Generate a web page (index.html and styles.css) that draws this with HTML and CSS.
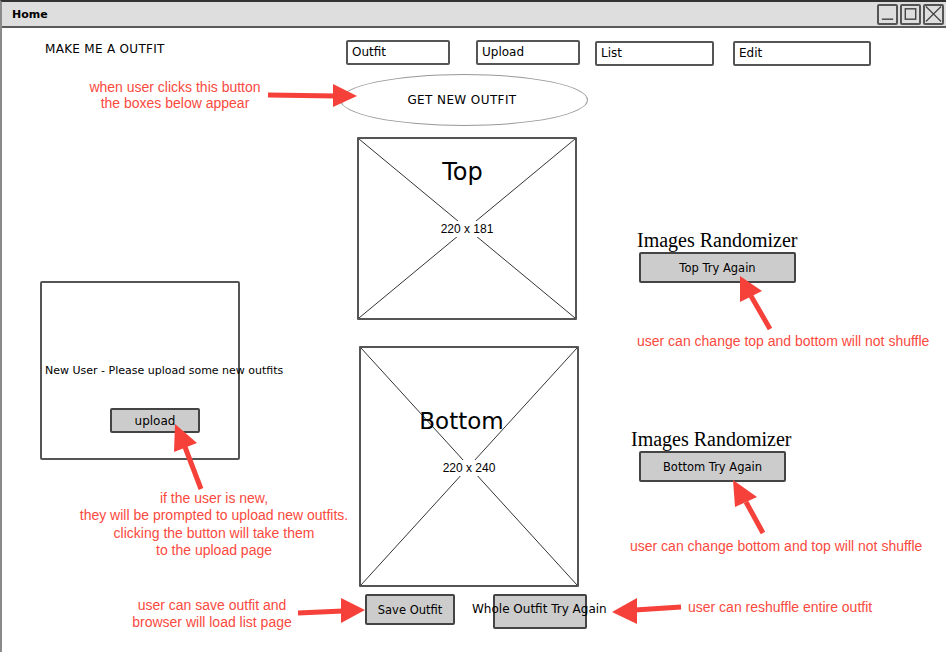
FILE: index.html
```html
<!DOCTYPE html>
<html lang="en">
<head>
<meta charset="utf-8">
<title>Home</title>
<link rel="stylesheet" href="styles.css">
</head>
<body>
<div class="window">
  <div class="titlebar">
    <span class="title">Home</span>
    <div class="winbtns">
      <span class="winbtn"><svg viewBox="0 0 18 18" width="18" height="18"><line x1="3" y1="14.5" x2="15" y2="14.5" stroke="#444" stroke-width="1.5"/></svg></span>
      <span class="winbtn"><svg viewBox="0 0 18 18" width="18" height="18"><rect x="3.5" y="3.5" width="11" height="11" fill="none" stroke="#444" stroke-width="1.5"/></svg></span>
      <span class="winbtn"><svg viewBox="0 0 18 18" width="18" height="18"><path d="M1 1 L17 17 M17 1 L1 17" stroke="#444" stroke-width="1.3"/></svg></span>
    </div>
  </div>

  <div class="content">
    <div class="header">
      <div class="brand">MAKE ME A OUTFIT</div>
      <div class="field w104">Outfit</div>
      <div class="field w104">Upload</div>
      <div class="field w119 low">List</div>
      <div class="field w138 low">Edit</div>
    </div>

    <div class="ellipse">GET NEW OUTFIT</div>

    <div class="main">
      <div class="col-left">
        <div class="newuser">
          <div class="newuser-text">New User - Please upload some new outfits</div>
          <div class="btn btn-upload">upload</div>
        </div>
      </div>

      <div class="col-mid">
        <div class="ph ph-top">
          <svg class="ph-x" viewBox="0 0 100 100" preserveAspectRatio="none"><path d="M0 0 L100 100 M100 0 L0 100" stroke="#333" stroke-width="1" vector-effect="non-scaling-stroke" fill="none"/></svg>
          <div class="ph-title ph-title-top">Top</div>
          <div class="ph-size ph-size-top">220 x 181</div>
        </div>
        <div class="ph ph-bottom">
          <svg class="ph-x" viewBox="0 0 100 100" preserveAspectRatio="none"><path d="M0 0 L100 100 M100 0 L0 100" stroke="#333" stroke-width="1" vector-effect="non-scaling-stroke" fill="none"/></svg>
          <div class="ph-title ph-title-bottom">Bottom</div>
          <div class="ph-size ph-size-bottom">220 x 240</div>
        </div>
        <div class="actions">
          <div class="btn btn-save">Save Outfit</div>
          <div class="whole">Whole Outfit Try Again</div>
        </div>
      </div>

      <div class="col-right">
        <div class="rand-title rt1">Images Randomizer</div>
        <div class="btn btn-top">Top Try Again</div>
        <div class="rand-title rt2">Images Randomizer</div>
        <div class="btn btn-bottom">Bottom Try Again</div>
      </div>
    </div>
  </div>

  <div class="overlay">
    <svg class="arrows" width="946" height="652" viewBox="0 0 946 652">
      <g stroke="#f5413a" stroke-width="5" fill="none">
        <line x1="268" y1="95" x2="336" y2="96"/>
        <line x1="770" y1="329" x2="751" y2="296"/>
        <line x1="763" y1="533" x2="746" y2="502"/>
        <line x1="201" y1="489" x2="185" y2="447"/>
        <line x1="298" y1="613" x2="343" y2="611"/>
        <line x1="681" y1="607" x2="635" y2="610"/>
      </g>
      <g fill="#f5413a">
        <polygon points="357,96 333,84 333,107"/>
        <polygon points="740,276 740,302 762,291"/>
        <polygon points="733,480 735,507 757,497"/>
        <polygon points="175,424 174,452 197,443"/>
        <polygon points="365,610 341,598 341,623"/>
        <polygon points="612,612 637,598 637,624"/>
      </g>
    </svg>
    <div class="note n1">when user clicks this button<br>the boxes below appear</div>
    <div class="note n2">user can change top and bottom will not shuffle</div>
    <div class="note n3">if the user is new,<br>they will be prompted to upload new outfits.<br>clicking the button will take them<br>to the upload page</div>
    <div class="note n4">user can change bottom and top will not shuffle</div>
    <div class="note n5">user can save outfit and<br>browser will load list page</div>
    <div class="note n6">user can reshuffle entire outfit</div>
  </div>
</div>
</body>
</html>
```

FILE: styles.css
```css
* { box-sizing: border-box; }
html, body { margin: 0; padding: 0; background: #fff; }
body {
  font-family: "DejaVu Sans", "Comic Sans MS", sans-serif;
  color: #000;
}
.window {
  position: relative;
  width: 946px;
  height: 652px;
  border-top: 2px solid #333;
  border-left: 2px solid #8a8a8a;
  overflow: hidden;
}
.titlebar {
  height: 26px;
  background: #dedede;
  border-bottom: 2px solid #5a5a5a;
  display: flex;
  align-items: center;
  padding-left: 10px;
  padding-right: 2px;
}
.title {
  font-size: 11px;
  font-weight: bold;
}
.winbtns {
  margin-left: auto;
  display: flex;
  gap: 2px;
}
.winbtn {
  width: 21px;
  height: 21px;
  border: 2px solid #555;
  border-radius: 2px;
  display: flex;
  align-items: center;
  justify-content: center;
  background: #dedede;
}
.winbtn svg { display: block; }

.content { padding-top: 12px; }
.header {
  display: grid;
  grid-template-columns: 301px 130px 119px 138px 138px;
  align-items: start;
  padding-left: 43px;
  height: 26px;
}
.brand {
  font-size: 12px;
  letter-spacing: 0.3px;
  line-height: 16px;
  padding-top: 1px;
  white-space: nowrap;
}
.field {
  height: 25px;
  border: 2px solid #555;
  border-radius: 2px;
  background: #fff;
  font-size: 12px;
  line-height: 21px;
  padding-left: 4px;
}
.field.low { margin-top: 1px; }
.w104 { width: 104px; }
.w119 { width: 119px; }
.w138 { width: 138px; }

.ellipse {
  margin-top: 8px;
  margin-left: 338px;
  width: 248px;
  height: 52px;
  border: 1px solid #999;
  border-radius: 50%;
  display: flex;
  align-items: center;
  justify-content: center;
  font-size: 12px;
  letter-spacing: 0.4px;
  padding-right: 4px;
}

.main {
  margin-top: 11px;
  padding-left: 38px;
  display: grid;
  grid-template-columns: 317px 274px 1fr;
  align-items: start;
}

.newuser {
  margin-top: 144px;
  width: 200px;
  height: 179px;
  border: 2px solid #555;
  border-radius: 2px;
  padding-top: 80px;
  display: flex;
  flex-direction: column;
}
.newuser-text {
  font-size: 11px;
  line-height: 16px;
  white-space: nowrap;
  padding-left: 3px;
}
.btn {
  background: #cccccc;
  border: 2px solid #444;
  border-radius: 2px;
  display: flex;
  align-items: center;
  justify-content: center;
  font-size: 11.5px;
  white-space: nowrap;
}
.btn-upload {
  margin-top: 29px;
  margin-left: 68px;
  width: 90px;
  height: 25px;
  font-size: 12px;
}

.col-mid { display: flex; flex-direction: column; }
.ph {
  position: relative;
  border: 2px solid #555;
  border-radius: 1px;
  background: #fff;
  display: flex;
  flex-direction: column;
  align-items: center;
}
.ph-x {
  position: absolute;
  left: 0; top: 0;
  width: 100%;
  height: 100%;
}
.ph-top { width: 220px; height: 183px; padding-top: 18px; }
.ph-bottom { width: 220px; height: 241px; margin-top: 26px; margin-left: 2px; padding-top: 58px; }
.ph-title {
  position: relative;
  font-size: 24px;
  line-height: 30px;
}
.ph-title-top { margin-right: 9px; }
.ph-title-bottom { margin-right: 15px; font-size: 23px; }
.ph-size {
  position: relative;
  font-family: "Liberation Sans", Arial, sans-serif;
  font-size: 12px;
  line-height: 16px;
  background: #fff;
  padding: 0 1px;
}
.ph-size-top { margin-top: 34px; }
.ph-size-bottom { margin-top: 24px; }

.actions {
  position: relative;
  z-index: 0;
  margin-top: 7px;
  margin-left: 8px;
  display: flex;
  align-items: center;
  height: 31px;
}
.btn-save { width: 90px; height: 31px; }
.whole {
  position: relative;
  margin-left: 17px;
  font-size: 12px;
  line-height: 31px;
  height: 31px;
  white-space: nowrap;
}
.whole::before {
  content: "";
  position: absolute;
  left: 21px;
  top: 0;
  width: 90px;
  height: 31px;
  background: #cccccc;
  border: 2px solid #444;
  border-radius: 2px;
  z-index: -1;
}

.col-right { display: flex; flex-direction: column; align-items: flex-start; }
.rand-title {
  font-family: "Liberation Serif", "Times New Roman", serif;
  font-size: 20px;
  line-height: 24px;
  color: #000;
  white-space: nowrap;
}
.rt1 { margin-top: 91px; margin-left: 6px; }
.rt2 { margin-top: 144px; }
.btn-top { margin-left: 8px; width: 157px; height: 31px; }
.btn-bottom { margin-left: 8px; width: 147px; height: 31px; }

.overlay {
  position: absolute;
  left: -2px;
  top: -2px;
  width: 946px;
  height: 652px;
  pointer-events: none;
}
.arrows { position: absolute; left: 0; top: 0; }
.note {
  position: absolute;
  font-family: "Liberation Sans", Arial, Helvetica, sans-serif;
  font-size: 14px;
  color: #fa4a40;
  white-space: nowrap;
}
.n1 { left: 75px; top: 79px; width: 200px; text-align: center; line-height: 16px; }
.n2 { left: 637px; top: 333px; line-height: 16px; }
.n3 { left: 64px; top: 490px; width: 300px; text-align: center; line-height: 17.3px; }
.n4 { left: 630px; top: 538px; line-height: 16px; }
.n5 { left: 112px; top: 597px; width: 200px; text-align: center; line-height: 17px; }
.n6 { left: 688px; top: 599px; line-height: 16px; }
```
